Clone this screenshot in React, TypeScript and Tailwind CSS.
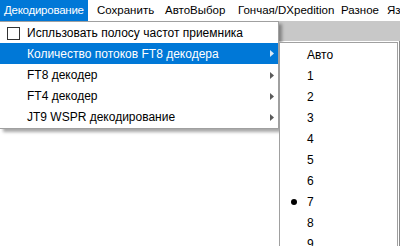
import React from 'react';

const menuBar = [
  { label: 'Декодирование', active: true, w: 88 },
  { label: 'Сохранить', w: 68 },
  { label: 'АвтоВыбор', w: 73 },
  { label: 'Гончая/DXpedition', w: 103 },
  { label: 'Разное', w: 46 },
  { label: 'Язык', w: 40 },
];

const threads = ['Авто', '1', '2', '3', '4', '5', '6', '7', '8', '9'];

const Arrow: React.FC<{ light?: boolean }> = ({ light }) => (
  <svg width="4" height="7" viewBox="0 0 4 7" className="shrink-0">
    <path d="M0 0 L4 3.5 L0 7 Z" fill={light ? '#ffffff' : '#5a5a5a'} opacity={light ? 0.85 : 1} />
  </svg>
);

const App: React.FC = () => {
  return (
    <div
      className="relative w-[400px] h-[246px] overflow-hidden bg-white text-[12px] text-black"
      style={{ fontFamily: '"Liberation Sans", Arial, sans-serif' }}
    >
      {/* Menu bar */}
      <div className="flex h-[21px] items-center bg-white text-[11.5px]">
        {menuBar.map((item) => (
          <div
            key={item.label}
            className={`flex h-full shrink-0 items-center pl-[4px] whitespace-nowrap ${item.active ? 'bg-[#0078d7] text-white tracking-[-0.25px] mr-[5px]' : ''}`}
            style={{ width: item.w }}
          >
            {item.label}
          </div>
        ))}
      </div>
      {/* Toolbar strip */}
      <div className="h-[20px] bg-[#c8c8c8]" />
      <div className="h-[205px] bg-white border-r border-[#8a8a8a]" />

      {/* Dropdown */}
      <div className="absolute left-0 top-[21px] w-[279px] bg-white border border-l-0 border-[#a0a0a0] py-[1px] shadow-[3px_3px_3px_rgba(0,0,0,0.35)]">
        <div className="flex h-[20px] items-center">
          <div className="ml-[7px] mr-[7px] h-[13px] w-[13px] border border-[#333] bg-white" />
          <span className="whitespace-nowrap">Испльзовать полосу частот приемника</span>
        </div>
        <div className="flex h-[21px] items-center bg-[#0078d7] text-white pl-[27px] pr-[4px]">
          <span className="flex-1">Количество потоков FT8 декодера</span>
          <Arrow light />
        </div>
        {['FT8 декодер', 'FT4 декодер', 'JT9 WSPR декодирование'].map((t) => (
          <div key={t} className="flex h-[20px] items-center pl-[27px] pr-[4px] mt-[1px]">
            <span className="flex-1">{t}</span>
            <Arrow />
          </div>
        ))}
      </div>

      {/* Submenu */}
      <div className="absolute left-[279px] top-[42px] w-[119px] h-[230px] bg-white border border-[#a0a0a0] pt-[1px]">
        {threads.map((t) => (
          <div key={t} className="relative flex h-[21px] items-center pl-[27px]">
            {t === '7' && (
              <span className="absolute left-[11px] top-[8px] h-[6px] w-[6px] rounded-full bg-black" />
            )}
            {t}
          </div>
        ))}
      </div>
    </div>
  );
};

export default App;
